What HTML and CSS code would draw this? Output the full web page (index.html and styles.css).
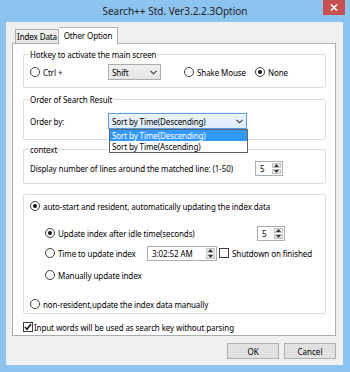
FILE: index.html
```html
<!DOCTYPE html>
<html lang="en">
<head>
    <meta charset="UTF-8">
    <title>Search++ Std. Ver3.2.2.3Option</title>
    <link rel="stylesheet" href="styles.css">
</head>
<body>
    <div class="window">
        <!-- Заголовок окна -->
        <div class="titlebar">
            <span class="title">Search++ Std. Ver3.2.2.3Option</span>
            <button class="close">
                <svg width="8" height="7" viewBox="0 0 8 7"><path d="M1 0.5 L7 6.5 M7 0.5 L1 6.5" stroke="#fff" stroke-width="1.6"/></svg>
            </button>
        </div>

        <div class="client">
            <div class="tabs">
                <div class="tab">Index Data</div>
                <div class="tab active">Other Option</div>
            </div>

            <div class="panel">
                <!-- Горячая клавиша -->
                <fieldset class="group g-hotkey">
                    <legend>Hotkey to activate the main screen</legend>
                    <div class="hotkey-row">
                        <label class="opt"><span class="radio"></span>Ctrl +</label>
                        <div class="select shift">
                            <span>Shift</span>
                            <svg class="chev" width="7" height="5" viewBox="0 0 7 5"><path d="M0.5 0.8 L3.5 3.8 L6.5 0.8" fill="none" stroke="#333" stroke-width="1.1"/></svg>
                        </div>
                        <label class="opt"><span class="radio"></span>Shake Mouse</label>
                        <label class="opt"><span class="radio on"></span>None</label>
                    </div>
                </fieldset>

                <!-- Порядок результатов -->
                <fieldset class="group g-order">
                    <legend>Order of Search Result</legend>
                    <div class="order-row">
                        <span class="order-label">Order by:</span>
                        <div class="select open">
                            <span>Sort by Time(Descending)</span>
                            <svg class="chev" width="7" height="5" viewBox="0 0 7 5"><path d="M0.5 0.8 L3.5 3.8 L6.5 0.8" fill="none" stroke="#333" stroke-width="1.1"/></svg>
                            <ul class="dropdown">
                                <li class="hl">Sort by Time(Descending)</li>
                                <li>Sort by Time(Ascending)</li>
                            </ul>
                        </div>
                    </div>
                </fieldset>

                <!-- Контекст -->
                <fieldset class="group g-context">
                    <legend>context</legend>
                    <div class="context-row">
                        <span class="context-label">Display number of lines around the matched line: (1-50)</span>
                        <div class="spin">
                            <span class="val">5</span>
                            <span class="arrows">
                                <i><svg width="5" height="3" viewBox="0 0 5 3"><path d="M0 3 L2.5 0 L5 3Z" fill="#333"/></svg></i>
                                <i><svg width="5" height="3" viewBox="0 0 5 3"><path d="M0 0 L2.5 3 L5 0Z" fill="#333"/></svg></i>
                            </span>
                        </div>
                    </div>
                </fieldset>

                <!-- Режим обновления индекса -->
                <fieldset class="group g-index">
                    <label class="opt row-main"><span class="radio on"></span>auto-start and resident, automatically updating the index data</label>

                    <div class="sub sub-idle">
                        <label class="opt idle-label"><span class="radio on"></span>Update index after idle time(seconds)</label>
                        <div class="spin">
                            <span class="val">5</span>
                            <span class="arrows">
                                <i><svg width="5" height="3" viewBox="0 0 5 3"><path d="M0 3 L2.5 0 L5 3Z" fill="#333"/></svg></i>
                                <i><svg width="5" height="3" viewBox="0 0 5 3"><path d="M0 0 L2.5 3 L5 0Z" fill="#333"/></svg></i>
                            </span>
                        </div>
                    </div>

                    <div class="sub sub-time">
                        <label class="opt time-label"><span class="radio"></span>Time to update index</label>
                        <div class="spin time">
                            <span class="val">3:02:52 AM</span>
                            <span class="arrows">
                                <i><svg width="5" height="3" viewBox="0 0 5 3"><path d="M0 3 L2.5 0 L5 3Z" fill="#333"/></svg></i>
                                <i><svg width="5" height="3" viewBox="0 0 5 3"><path d="M0 0 L2.5 3 L5 0Z" fill="#333"/></svg></i>
                            </span>
                        </div>
                        <label class="opt check-opt"><span class="check"></span>Shutdown on finished</label>
                    </div>

                    <div class="sub sub-manual">
                        <label class="opt"><span class="radio"></span>Manually update index</label>
                    </div>

                    <label class="opt row-nonres"><span class="radio"></span>non-resident,update the index data manually</label>
                </fieldset>

                <label class="opt parse-row">
                    <span class="check checked">
                        <svg width="8" height="8" viewBox="0 0 8 8"><path d="M1 4 L3 6.3 L7 1" fill="none" stroke="#111" stroke-width="1.5"/></svg>
                    </span>Input words will be used as search key without parsing
                </label>
            </div>

            <div class="buttons">
                <button class="btn">OK</button>
                <button class="btn">Cancel</button>
            </div>
        </div>
    </div>
</body>
</html>
```

FILE: styles.css
```css
body {
    margin: 0;
    background-color: #8dc3ef;
    font-family: "Noto Sans", "Open Sans", sans-serif;
    font-size: 8px;
    letter-spacing: -0.1px;
    color: #000;
}
.window {
    width: 350px;
    height: 372px;
    display: flex;
    flex-direction: column;
}

/* Заголовок */
.titlebar {
    height: 22px;
    display: grid;
    grid-template-columns: 1fr auto 1fr;
    align-items: center;
}
.title {
    grid-column: 2;
    font-size: 10px;
    letter-spacing: 0;
    color: #222;
}
.close {
    grid-column: 3;
    justify-self: end;
    align-self: start;
    margin-right: 5px;
    width: 22px;
    height: 15px;
    padding: 0;
    border: none;
    background-color: #c75050;
    display: flex;
    align-items: center;
    justify-content: center;
}

/* Клиентская область */
.client {
    flex: 1;
    margin: 0 7px 7px 6px;
    background-color: #f0f0f0;
    padding: 5px 7px 6px 6px;
    display: flex;
    flex-direction: column;
}
.tabs {
    display: flex;
    align-items: flex-end;
    height: 16px;
    padding-left: 3px;
    position: relative;
    z-index: 1;
}
.tab {
    height: 14px;
    box-sizing: border-box;
    width: 44px;
    border: 1px solid #adadad;
    border-bottom: none;
    background: linear-gradient(#f0f0f0, #e5e5e5);
    display: flex;
    align-items: center;
    justify-content: center;
}
.tab.active {
    width: 59px;
    height: 17px;
    margin-bottom: -1px;
    background: #fff;
    border-left: 1px solid #adadad;
    padding-bottom: 2px;
}
.tab + .tab {
    border-left: none;
}
.panel {
    height: 293px;
    box-sizing: border-box;
    border: 1px solid #adadad;
    background-color: #fff;
    padding: 5px 9px 0 10px;
    display: flex;
    flex-direction: column;
}

/* Группы */
.group {
    margin: 0;
    padding: 0 6px;
    border: 1px solid #dcdcdc;
    border-radius: 2px;
    min-width: 0;
}
.group legend {
    padding: 0 1px;
    margin-left: -1px;
    line-height: 11px;
}
.g-hotkey {
    padding-top: 4px;
    padding-bottom: 7px;
}
.g-order {
    margin-top: 6px;
    padding-top: 8px;
    padding-bottom: 10px;
}
.g-context {
    margin-top: 4px;
    padding-top: 6px;
    padding-bottom: 7px;
}
.g-index {
    margin-top: 10px;
    padding-top: 3px;
    padding-bottom: 1px;
    display: flex;
    flex-direction: column;
}

.opt {
    display: flex;
    align-items: center;
    gap: 3px;
    white-space: nowrap;
}
.radio {
    width: 10px;
    height: 10px;
    box-sizing: border-box;
    border: 1px solid #3c3c3c;
    border-radius: 50%;
    background: #fff;
    display: flex;
    align-items: center;
    justify-content: center;
    flex-shrink: 0;
}
.radio.on::after {
    content: "";
    width: 4px;
    height: 4px;
    border-radius: 50%;
    background: #111;
}
.check {
    width: 10px;
    height: 10px;
    box-sizing: border-box;
    border: 1px solid #3c3c3c;
    background: #fff;
    display: flex;
    align-items: center;
    justify-content: center;
    flex-shrink: 0;
}

.hotkey-row {
    display: grid;
    grid-template-columns: 78px 76px 71px auto;
    align-items: center;
    height: 16px;
}
.select {
    height: 16px;
    box-sizing: border-box;
    border: 1px solid #acacac;
    background: linear-gradient(#f0f0f0, #e5e5e5);
    display: flex;
    align-items: center;
    justify-content: space-between;
    padding: 0 3px 0 3px;
    position: relative;
}
.select.shift {
    width: 53px;
}
.select.open {
    width: 139px;
    border-color: #569de5;
    background: linear-gradient(#ecf4fc, #dcecfc);
}
.dropdown {
    position: absolute;
    top: 15px;
    left: 0;
    width: 139px;
    box-sizing: border-box;
    margin: 0;
    padding: 0;
    list-style: none;
    background: #fff;
    border: 1px solid #646464;
    z-index: 2;
}
.dropdown li {
    height: 11px;
    line-height: 11px;
    padding-left: 2px;
}
.dropdown li.hl {
    background-color: #3399ff;
    color: #fff;
}

.order-row {
    display: grid;
    grid-template-columns: 78px 139px;
    align-items: center;
    height: 16px;
}
.context-row {
    display: grid;
    grid-template-columns: 225px 28px;
    align-items: center;
    height: 15px;
}

/* Счётчик */
.spin {
    width: 28px;
    height: 15px;
    box-sizing: border-box;
    border: 1px solid #abadb3;
    background: #fff;
    display: flex;
}
.spin .val {
    flex: 1;
    padding-left: 4px;
    line-height: 13px;
}
.spin .arrows {
    width: 9px;
    display: flex;
    flex-direction: column;
    gap: 1px;
    padding: 1px;
}
.spin .arrows i {
    flex: 1;
    background: #e6e6e6;
    border: 1px solid #c2c2c2;
    display: flex;
    align-items: center;
    justify-content: center;
}
.spin.time {
    width: 70px;
}

.row-main {
    height: 16px;
}
.sub {
    margin-left: 15px;
    display: flex;
    align-items: center;
    height: 16px;
}
.sub-idle {
    margin-top: 11px;
}
.idle-label {
    width: 212px;
}
.sub-time {
    margin-top: 4px;
}
.time-label {
    width: 102px;
}
.check-opt {
    margin-left: 2px;
}
.sub-manual {
    margin-top: 6px;
}
.row-nonres {
    margin-top: 13px;
    height: 16px;
}

.parse-row {
    margin-top: 6px;
    height: 14px;
    gap: 1px;
}

/* Кнопки */
.buttons {
    margin-top: 7px;
    display: flex;
    justify-content: flex-end;
    gap: 5px;
}
.btn {
    width: 52px;
    height: 16px;
    padding: 0;
    border: 1px solid #adadad;
    background-color: #e1e1e1;
    font-family: inherit;
    font-size: 8px;
    color: #000;
}
```
